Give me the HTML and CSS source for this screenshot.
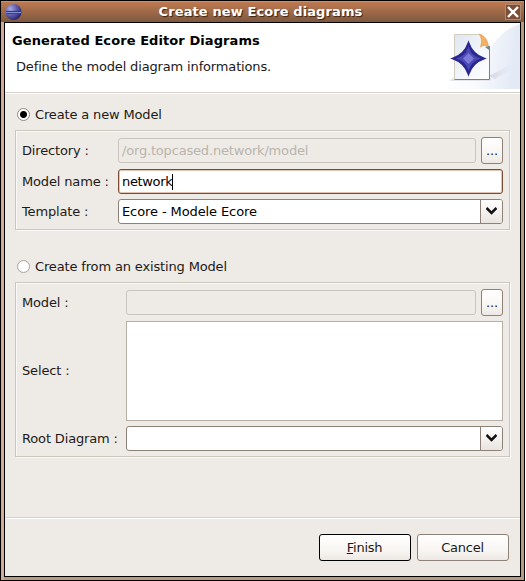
FILE: index.html
```html
<!DOCTYPE html>
<html lang="en">
<head>
<meta charset="utf-8">
<title>Create new Ecore diagrams</title>
<link rel="stylesheet" href="styles.css">
</head>
<body>
<div class="window">
  <header class="titlebar">
    <svg class="app-icon" width="18" height="18" viewBox="0 0 18 18">
      <defs><radialGradient id="orb" cx=".3" cy=".3" r=".8"><stop offset="0" stop-color="#aaa9dc"/><stop offset=".5" stop-color="#5f5eae"/><stop offset="1" stop-color="#231d66"/></radialGradient></defs>
      <circle cx="8.500" cy="9" r="8" fill="url(#orb)"/>
      <path d="M1 8.500h15" stroke="#343282"/>
      <path d="M1 9.500h15" stroke="#8792d6"/>
      <path d="M1.500 10.500h14" stroke="#3e3c90"/>
    </svg>
    <h1 class="title">Create new Ecore diagrams</h1>
    <svg class="close" width="16" height="16" viewBox="0 0 16 16">
      <rect x=".5" y=".5" width="15" height="15" fill="#7c4e35" stroke="#b08a74"/>
      <path d="M3 3l10 10M13 3l-10 10" stroke="#fff" stroke-width="2.400"/>
    </svg>
  </header>
  <main class="client">
    <section class="banner">
      <div class="banner-text">
        <h2 class="heading">Generated Ecore Editor Diagrams</h2>
        <p class="message">Define the model diagram informations.</p>
      </div>
      <svg class="banner-art" width="75" height="66" viewBox="0 0 75 66">
        <defs>
          <linearGradient id="sweep" x1="0" y1="0" x2="1" y2=".1"><stop offset="0" stop-color="#fff"/><stop offset=".5" stop-color="#f8fafd"/><stop offset="1" stop-color="#e3e9f5"/></linearGradient>
          <linearGradient id="paper" x1="0" y1="0" x2="1" y2="1"><stop offset="0" stop-color="#dfe6f0"/><stop offset=".6" stop-color="#f4f7fb"/><stop offset="1" stop-color="#fff"/></linearGradient>
          <linearGradient id="shade" x1="0" y1="0" x2="1" y2="0"><stop offset="0" stop-color="#d3d5e3"/><stop offset="1" stop-color="#e6eaf5" stop-opacity="0"/></linearGradient>
        </defs>
        <path d="M75 1C63 4 51 15 44 28C32 46 20 60 0 62V66H75Z" fill="url(#sweep)"/>
        <path d="M44 53L68 40L72 44L50 56Z" fill="url(#shade)"/>
        <path d="M5 57L10 54H46V58H5Z" fill="#e4e6eb"/>
        <path d="M9.500 11.500H34L44.500 23V56.500H9.500Z" fill="url(#paper)"/>
        <path d="M9.500 56V11.500H34" fill="none" stroke="#d3cdbd"/>
        <path d="M44.500 23V56.500H9.500" fill="none" stroke="#71838b"/>
        <path d="M34 11C39 12 43 17 43.500 24C41 22 38 22 35.500 24C37 19 37 15 34 11Z" fill="#f5b05d" stroke="#dc9f58" stroke-width=".7"/>
        <path d="M40 24L44 23V27Z" fill="#7c858f"/>
        <path d="M23.500 19.500Q27.500 31.500 39.500 35.500Q27.500 39.500 23.500 51.500Q19.500 39.500 7.500 35.500Q19.500 31.500 23.500 19.500Z" fill="#292790" stroke="#292790" stroke-width="1.500"/>
        <path d="M23.500 26Q26 33 33 35.500Q26 38 23.500 45Q21 38 14 35.500Q21 33 23.500 26Z" fill="#4b49b2" stroke="#4b49b2" stroke-width="2"/>
        <path d="M23.500 30L29 35.500L23.500 41L18 35.500Z" fill="#7d79da"/>
      </svg>
    </section>
    <section class="content">
      <div class="radio-row"><span class="radio checked"></span>Create a new Model</div>
      <div class="group group-new">
        <span class="label">Directory :</span>
        <div class="with-browse"><div class="field disabled">/org.topcased.network/model</div><button class="browse">...</button></div>
        <span class="label">Model name :</span>
        <div class="field focused">network<i class="caret"></i></div>
        <span class="label">Template :</span>
        <div class="field combo">Ecore - Modele Ecore<span class="arrow"><svg width="11" height="8" viewBox="0 0 11 8"><path d="M.5 1L5.500 6L10.500 1" fill="none" stroke="#111" stroke-width="2.500"/></svg></span></div>
      </div>
      <div class="radio-row second"><span class="radio"></span>Create from an existing Model</div>
      <div class="group group-existing">
        <span class="label">Model :</span>
        <div class="with-browse"><div class="field disabled"></div><button class="browse">...</button></div>
        <span class="label">Select :</span>
        <div class="list"></div>
        <span class="label">Root Diagram :</span>
        <div class="field combo"><span class="arrow"><svg width="11" height="8" viewBox="0 0 11 8"><path d="M.5 1L5.500 6L10.500 1" fill="none" stroke="#111" stroke-width="2.500"/></svg></span></div>
      </div>
    </section>
    <footer class="actions">
      <button class="action default"><u>F</u>inish</button>
      <button class="action">Cancel</button>
    </footer>
  </main>
</div>
</body>
</html>
```

FILE: styles.css
```css
* { box-sizing: border-box; }
body {
  margin: 0;
  background: #fff;
  font: 13px/16px "DejaVu Sans", sans-serif;
  letter-spacing: -0.15px;
  color: #1c1a19;
}
.window {
  display: flex;
  flex-direction: column;
  width: 525px;
  height: 581px;
  padding: 0 3px 3px;
  border: 1px solid #000;
  background: linear-gradient(90deg, #d3aa9a 3px, #b89a80 3px);
}
.titlebar {
  display: flex;
  align-items: center;
  flex: none;
  height: 21px;
  margin: 0 -3px;
  padding: 0 3px 0 4px;
  border-top: 1px solid #d18c68;
  background: linear-gradient(#bf7950, #7d593f);
}
.title {
  flex: 1;
  margin: 0;
  padding-right: 7px;
  text-align: center;
  font-size: 13px;
  line-height: 18px;
  letter-spacing: 0.1px;
  color: #fff;
  text-shadow: 1px 1px 1px #3a2010;
}
.client {
  flex: 1;
  display: flex;
  flex-direction: column;
  border: 1px solid #000;
  background: #eeebe6;
}
.banner {
  display: flex;
  justify-content: space-between;
  flex: none;
  height: 70px;
  background: #fff;
  border-bottom: 1px solid #d5d0c9;
}
.banner-text { padding: 10px 0 0 7px; }
.heading { margin: 0; font-size: 13px; line-height: 16px; letter-spacing: 0.08px; color: #000; }
.message { margin: 10px 0 0 4px; }
.content {
  flex: 1;
  padding: 12px 10px 0;
  border-top: 1px solid #fff;
}
.radio-row { display: flex; align-items: center; height: 17px; padding-left: 2px; }
.radio-row.second { margin-top: 28px; }
.radio {
  width: 13px;
  height: 13px;
  margin-right: 5px;
  border: 1px solid #a9a29a;
  border-radius: 50%;
  background: #fff;
}
.radio.checked { background: radial-gradient(circle, #000 3px, #fff 4px); border-color: #928a82; }
.group {
  display: grid;
  align-items: center;
  border: 1px solid #cbc6be;
  padding: 6px;
  box-shadow: 1px 1px 0 #faf9f7, inset 1px 1px 0 #faf9f7;
}
.group-new {
  grid-template-columns: 96px 385px;
  grid-template-rows: 27px 25px 25px;
  row-gap: 5px;
  height: 100px;
  margin-top: 7px;
}
.group-existing {
  grid-template-columns: 104px 377px;
  grid-template-rows: 27px 100px 25px;
  row-gap: 5px;
  height: 175px;
  margin-top: 7px;
}
.label { white-space: nowrap; }
.with-browse { display: flex; align-items: center; gap: 5px; }
.field {
  display: flex;
  align-items: center;
  flex: 1;
  height: 25px;
  padding-left: 3px;
  border: 1px solid #8e8278;
  border-radius: 3px;
  background: #fff;
  color: #000;
}
.field.disabled { background: #eeebe6; border-color: #c9c4bd; color: #b9b4ad; letter-spacing: -0.18px; }
.field.focused { border-color: #7d4a32; box-shadow: inset 0 0 0 1px #e2c4b4; letter-spacing: -0.35px; }
.field.combo { letter-spacing: -0.1px; }
.caret { width: 1px; height: 16px; background: #000; }
.arrow {
  display: flex;
  align-items: center;
  justify-content: center;
  width: 22px;
  height: 23px;
  margin-left: auto;
  border-left: 1px solid #8e8278;
  border-radius: 0 2px 2px 0;
  background: linear-gradient(#fff, #e9e4df);
}
.arrow svg { margin-top: -2px; }
.browse, .action {
  padding: 0;
  border: 1px solid #8e8278;
  border-radius: 3px;
  background: linear-gradient(#fff, #f8f6f3 60%, #eee8e3);
  font: inherit;
  letter-spacing: inherit;
  color: #1c1a19;
}
.browse { width: 22px; height: 27px; }
.list { height: 100px; border: 1px solid #b7afa6; background: #fff; }
.actions {
  display: flex;
  justify-content: flex-end;
  gap: 6px;
  flex: none;
  height: 59px;
  padding: 16px 11px 0 10px;
  border-top: 1px solid #d5d0c9;
  box-shadow: inset 0 1px 0 #fff;
}
.action { width: 92px; height: 27px; padding-right: 1px; letter-spacing: -0.25px; }
.action.default { border-color: #000; }
```
